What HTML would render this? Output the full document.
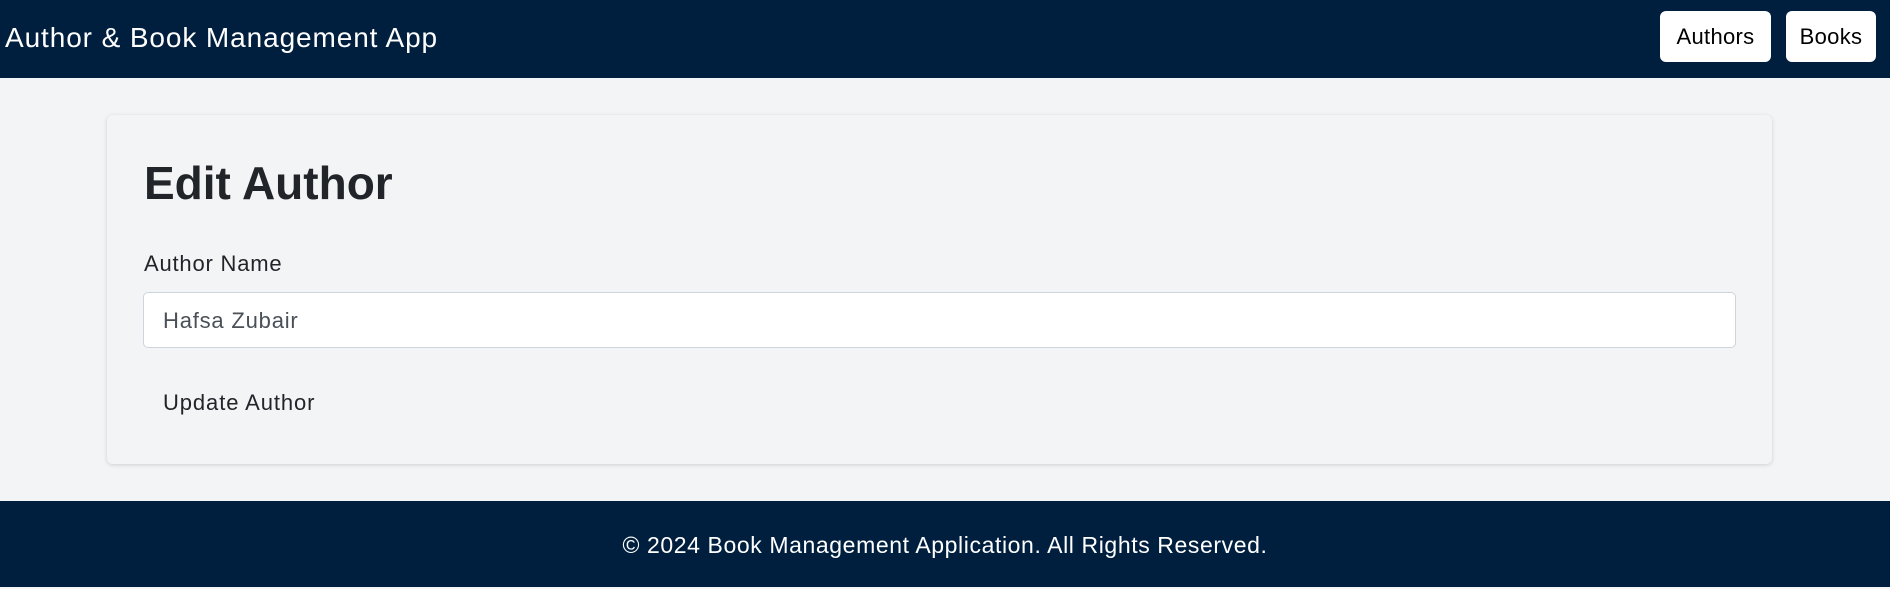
<!DOCTYPE html>
<html><head><style>
*{box-sizing:border-box;margin:0;padding:0}
body{width:1890px;height:587px;background:#f3f4f6;font-family:"Liberation Sans",sans-serif;color:#212529;position:relative;overflow:hidden}
.nav{position:absolute;left:0;top:0;width:1890px;height:78px;background:#001f3f}
.brand{position:absolute;left:5px;top:22px;color:#fff;font-size:28px;line-height:32px;letter-spacing:0.9px}
.btn{position:absolute;top:11px;height:51px;background:#fff;border-radius:6px;color:#000;font-size:22px;line-height:51px;text-align:center;letter-spacing:0.3px}
.card{position:absolute;left:107px;top:115px;width:1665px;height:349px;background:#f3f4f6;border-radius:6px;box-shadow:0 1px 4px rgba(0,0,0,.15)}
h1{position:absolute;left:144px;top:154px;font-size:46px;line-height:58px;font-weight:bold}
.label{position:absolute;left:144px;top:251px;font-size:22px;line-height:26px;letter-spacing:0.8px}
.input{position:absolute;left:143px;top:292px;width:1593px;height:56px;background:#fff;border:1px solid #ced4da;border-radius:5px;font-size:22px;line-height:56px;padding-left:19px;color:#495057;letter-spacing:0.8px}
.upd{position:absolute;left:163px;top:390px;font-size:22px;line-height:26px;letter-spacing:0.9px}
.foot{position:absolute;left:0;top:501px;width:1890px;height:86px;background:#001f3f;color:#fff;font-size:23px;text-align:center;line-height:88px;letter-spacing:0.6px}
</style></head><body>
<div class="nav"><div class="brand">Author &amp; Book Management App</div>
<div class="btn" style="left:1660px;width:111px">Authors</div>
<div class="btn" style="left:1786px;width:90px">Books</div></div>
<div class="card"></div>
<h1>Edit Author</h1>
<div class="label">Author Name</div>
<div class="input">Hafsa Zubair</div>
<div class="upd">Update Author</div>
<div class="foot">© 2024 Book Management Application. All Rights Reserved.</div>
</body></html>
